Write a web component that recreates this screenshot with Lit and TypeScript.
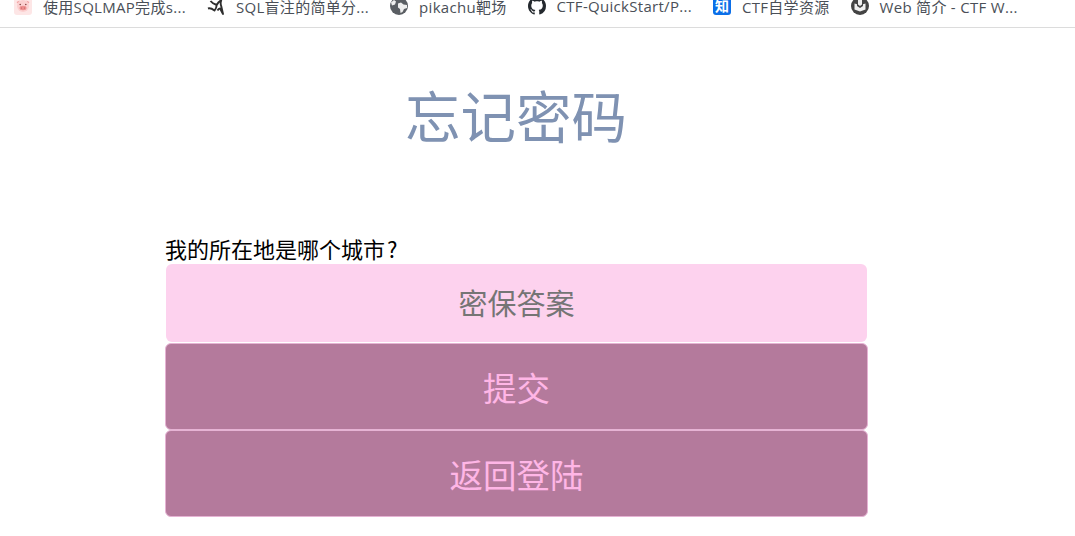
import { LitElement, html, css } from "lit";
import { customElement } from "lit/decorators.js";

const pig = html`<svg class="ico" viewBox="0 0 18 18"><rect width="18" height="18" rx="3" fill="#fde6e6"/><path d="M2.500 5l3-1.500L5 8zM15.500 5l-3-1.500L13 8z" fill="#f3a5a5"/><circle cx="9" cy="9" r="6" fill="#fbd0d0"/><ellipse cx="9" cy="11" rx="3.500" ry="2.200" fill="#ee9090"/><circle cx="7.600" cy="11" r=".6" fill="#b55"/><circle cx="10.400" cy="11" r=".6" fill="#b55"/><circle cx="6.200" cy="7.500" r=".8" fill="#844"/><circle cx="11.800" cy="7.500" r=".8" fill="#844"/></svg>`;
const dolphin = html`<svg class="ico" viewBox="0 0 18 18"><path d="M1 11.500c2.500-1 4.500.5 6.500 2 1-1 2-3 2.200-5.500C7 7 5 6 3.500 4M9.700 8c1-2 2.500-4 4.500-4.500-.8 2-.8 3.500 0 5.500l1.800 8c-1.200-2-2.200-4-3-5.500-1.200 0-2 1-2.500 2" fill="none" stroke="#2e2e2e" stroke-width="1.900" stroke-linejoin="round"/></svg>`;
const globe = html`<svg class="ico" viewBox="0 0 18 18"><circle cx="9" cy="9" r="9" fill="#5a5e63"/><path d="M8 6.500l3-1 2.500 2 3.500.5v3l-3 1-1.500 3-2 1-.5-4-2-1.500zM1 5.500l3-2.500 2 1.500-1 3-3 1z" fill="#eeeeee"/></svg>`;
const github = html`<svg class="ico" viewBox="0 0 16 16"><path fill="#24292e" d="M8 0C3.580 0 0 3.580 0 8c0 3.540 2.290 6.530 5.470 7.590.4.070.55-.17.55-.38 0-.19-.01-.82-.01-1.490-2.010.37-2.530-.49-2.690-.94-.09-.23-.48-.94-.82-1.130-.28-.15-.68-.52-.01-.53.63-.01 1.080.58 1.230.82.72 1.210 1.870.87 2.330.66.070-.52.28-.87.51-1.070-1.780-.2-3.640-.89-3.640-3.950 0-.87.31-1.590.82-2.150-.08-.2-.36-1.020.08-2.120 0 0 .67-.21 2.200.82.64-.18 1.320-.27 2-.27s1.360.09 2 .27c1.530-1.040 2.200-.82 2.200-.82.44 1.100.16 1.920.08 2.120.51.560.82 1.270.82 2.150 0 3.070-1.870 3.750-3.650 3.950.29.250.54.730.54 1.480 0 1.070-.01 1.930-.01 2.200 0 .21.15.46.55.38A8.010 8.010 0 0 0 16 8c0-4.420-3.580-8-8-8z"/></svg>`;
const zhi = html`<span class="zhi">知</span>`;
const book = html`<svg class="ico" viewBox="0 0 18 18"><circle cx="9" cy="9" r="9" fill="#444"/><path d="M3.500 6.500l2.500.7V9l3 2 3-2V7.200l2.500-.7v6L9 14.500l-5.500-2z" fill="#f0f0f0"/><path d="M7 3h4v4.500L9 9 7 7.500z" fill="#f0f0f0"/></svg>`;

const BOOKMARKS = [
  { icon: pig, text: "使用SQLMAP完成s..." },
  { icon: dolphin, text: "SQL盲注的简单分..." },
  { icon: globe, text: "pikachu靶场" },
  { icon: github, text: "CTF-QuickStart/P..." },
  { icon: zhi, text: "CTF自学资源" },
  { icon: book, text: "Web 简介 - CTF W..." },
];

@customElement("app-root")
export class AppRoot extends LitElement {
  static styles = css`
    :host {
      display: block;
      width: 1075px;
      height: 536px;
      overflow: hidden;
      background: #fff;
      font-family: "Open Sans", "Noto Sans CJK SC", sans-serif;
    }
    .bar {
      height: 27px;
      border-bottom: 1px solid #dcdcdc;
      display: flex;
      align-items: center;
      gap: 21px;
      padding-left: 14px;
      overflow: hidden;
    }
    .bm {
      display: flex;
      align-items: center;
      gap: 11px;
      font-size: 15px;
      letter-spacing: 0.3px;
      color: #4a4f57;
      white-space: nowrap;
      margin-top: -15px;
      height: 28px;
      flex: none;
    }
    .ico, .zhi {
      width: 18px;
      height: 18px;
      flex: none;
      display: block;
    }
    .zhi {
      background: #0b6fe8;
      border-radius: 3px;
      color: #fff;
      font-size: 14px;
      font-weight: 700;
      line-height: 18px;
      letter-spacing: 0;
      text-align: center;
    }
    h1 {
      margin: 0;
      padding-top: 57px;
      height: 150px;
      box-sizing: border-box;
      font-size: 55.500px;
      line-height: 64px;
      font-weight: 400;
      color: #7f92b2;
      text-align: center;
      width: 1032px;
    }
    form {
      margin: 0 0 0 165px;
      width: 703px;
      display: flex;
      flex-direction: column;
      padding-top: 57px;
    }
    label {
      font-family: "Noto Sans CJK SC", sans-serif;
      font-size: 22px;
      line-height: 26px;
      color: #000;
      height: 29px;
    }
    .q {
      margin-left: 2px;
    }
    input, button {
      font-family: inherit;
      box-sizing: border-box;
      margin: 0;
      border-radius: 6px;
      text-align: center;
      outline: none;
    }
    input {
      width: 701px;
      align-self: center;
      height: 78px;
      margin-bottom: 1px;
      border: none;
      background: #fdd2ee;
      font-size: 29px;
    }
    input::placeholder {
      color: #757575;
      opacity: 1;
    }
    button {
      width: 100%;
      height: 87px;
      border: 1px solid #e6b3d4;
      background: #b47a9c;
      color: #ffb6e6;
      font-size: 33.500px;
    }
  `;

  render() {
    return html`
      <div class="bar">
        ${BOOKMARKS.map((b) => html`<div class="bm">${b.icon}<span>${b.text}</span></div>`)}
      </div>
      <h1>忘记密码</h1>
      <form @submit=${(e: Event) => e.preventDefault()}>
        <label>我的所在地是哪个城市<span class="q">?</span></label>
        <input type="text" placeholder="密保答案" />
        <button type="submit">提交</button>
        <button type="button">返回登陆</button>
      </form>
    `;
  }
}
